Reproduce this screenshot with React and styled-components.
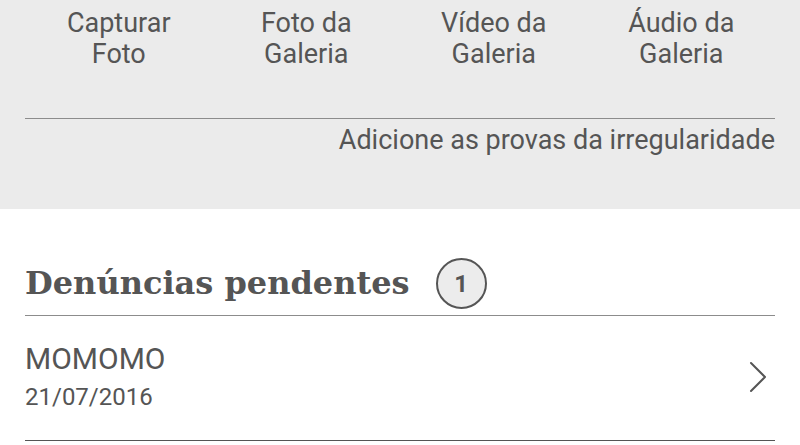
import React from "react";
import styled, { createGlobalStyle } from "styled-components";

const Global = createGlobalStyle`
  html, body { margin: 0; padding: 0; background: #ffffff; }
  body { font-family: Roboto, "Liberation Sans", sans-serif; color: #555555; }
`;

const Page = styled.div`
  width: 800px;
  height: 445px;
  overflow: hidden;
  display: flex;
  flex-direction: column;
`;

const Attach = styled.section`
  height: 209px;
  box-sizing: border-box;
  background: #ebebeb;
  padding: 8px 25px 0;
  display: flex;
  flex-direction: column;
`;

const Actions = styled.div`
  display: grid;
  grid-template-columns: repeat(4, 1fr);
`;

const Action = styled.button`
  border: 0;
  background: transparent;
  padding: 0;
  font-family: Roboto, "Liberation Sans", sans-serif;
  font-size: 27px;
  line-height: 31px;
  color: #555555;
  text-align: center;
  cursor: pointer;
`;

const Rule = styled.hr`
  border: 0;
  height: 1px;
  background: ${(p) => p.$color || "#8c8c8c"};
  margin: ${(p) => p.$margin || "0"};
`;

const Caption = styled.p`
  margin: 4px 0 0;
  font-size: 27px;
  line-height: 34px;
  text-align: right;
  color: #555555;
`;

const Pending = styled.section`
  padding: 0 25px;
  display: flex;
  flex-direction: column;
`;

const HeadRow = styled.div`
  display: flex;
  align-items: center;
  gap: 26px;
  margin-top: 49px;
  height: 51px;
`;

const Title = styled.h2`
  margin: 0;
  font-family: "DejaVu Serif", "Liberation Serif", serif;
  font-weight: bold;
  font-size: 32px;
  color: #555555;
  line-height: 51px;
`;

const Badge = styled.span`
  width: 47px;
  height: 47px;
  border: 2px solid #555555;
  border-radius: 50%;
  background: #ececec;
  display: flex;
  align-items: center;
  justify-content: center;
  font-family: Roboto, "Liberation Sans", sans-serif;
  font-weight: bold;
  font-size: 24px;
  color: #555555;
`;

const Item = styled.div`
  display: flex;
  align-items: center;
  justify-content: space-between;
  padding: 26px 8px 28px 0;
`;

const ItemText = styled.div`
  display: flex;
  flex-direction: column;
`;

const ItemName = styled.span`
  font-size: 30px;
  line-height: 34px;
  color: #555555;
`;

const ItemDate = styled.span`
  margin-top: 6px;
  font-size: 24px;
  line-height: 30px;
  color: #555555;
`;

const Chevron = () => (
  <svg width="18" height="32" viewBox="0 0 18 32" fill="none">
    <path d="M2 2 L16 16 L2 30" stroke="#555555" strokeWidth="2" strokeLinecap="round" strokeLinejoin="round" />
  </svg>
);

const actions = [
  ["Capturar", "Foto"],
  ["Foto da", "Galeria"],
  ["Vídeo da", "Galeria"],
  ["Áudio da", "Galeria"],
];

export default function App() {
  return (
    <>
      <Global />
      <Page>
        <Attach>
          <Actions>
            {actions.map(([a, b]) => (
              <Action key={a + b}>
                {a}
                <br />
                {b}
              </Action>
            ))}
          </Actions>
          <Rule $margin="48px 0 0" />
          <Caption>Adicione as provas da irregularidade</Caption>
        </Attach>
        <Pending>
          <HeadRow>
            <Title>Denúncias pendentes</Title>
            <Badge>1</Badge>
          </HeadRow>
          <Rule $margin="6px 0 0" />
          <Item>
            <ItemText>
              <ItemName>MOMOMO</ItemName>
              <ItemDate>21/07/2016</ItemDate>
            </ItemText>
            <Chevron />
          </Item>
          <Rule $color="#555555" $margin="0" />
        </Pending>
      </Page>
    </>
  );
}
